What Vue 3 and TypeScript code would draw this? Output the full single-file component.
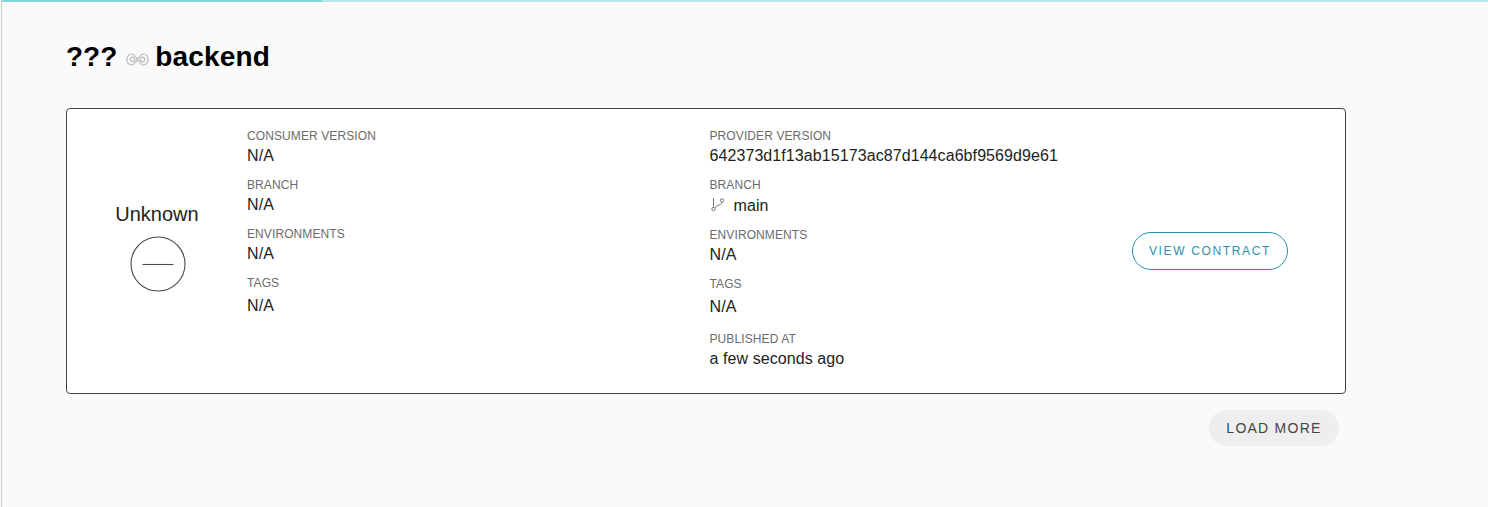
<script setup lang="ts">
interface Field { label: string; value: string; branch?: boolean; cls?: string }
const consumer: Field[] = [
  { label: 'CONSUMER VERSION', value: 'N/A' },
  { label: 'BRANCH', value: 'N/A' },
  { label: 'ENVIRONMENTS', value: 'N/A' },
  { label: 'TAGS', value: 'N/A', cls: 'tags' },
]
const provider: Field[] = [
  { label: 'PROVIDER VERSION', value: '642373d1f13ab15173ac87d144ca6bf9569d9e61' },
  { label: 'BRANCH', value: 'main', branch: true },
  { label: 'ENVIRONMENTS', value: 'N/A' },
  { label: 'TAGS', value: 'N/A', cls: 'tags' },
  { label: 'PUBLISHED AT', value: 'a few seconds ago', cls: 'published' },
]
</script>

<template>
  <div class="page">
    <div class="progress"><div class="progress-fill"></div></div>
    <main class="content">
      <h1 class="title">
        <span>???</span>
        <svg class="link-icon" width="23" height="13" viewBox="0 0 23 13" fill="none" stroke="#b8b8b8" stroke-width="1.2">
          <path d="M11.500 6.500C9.500 3 7.800 1 5.500 1 2.900 1 .8 3.400.8 6.500S2.900 12 5.500 12c2.300 0 4-2 6-5.500zM11.500 6.500C13.500 3 15.200 1 17.500 1c2.600 0 4.700 2.400 4.700 5.500S20.100 12 17.500 12c-2.300 0-4-2-6-5.500z" />
          <circle cx="6.500" cy="6.500" r="2.300" />
          <circle cx="16.500" cy="6.500" r="2.300" />
        </svg>
        <span class="provider-name">backend</span>
      </h1>
      <section class="card">
        <div class="status">
          <div class="status-text">Unknown</div>
          <svg class="status-icon" width="56" height="56" viewBox="0 0 56 56" fill="none" stroke="#4a4a4a" stroke-width="1.100">
            <circle cx="28" cy="28" r="27" />
            <path d="M12.500 28.500h31" />
          </svg>
        </div>
        <div class="col">
          <div v-for="f in consumer" :key="f.label" class="field" :class="f.cls">
            <div class="label">{{ f.label }}</div>
            <div class="value">{{ f.value }}</div>
          </div>
        </div>
        <div class="col provider">
          <div v-for="f in provider" :key="f.label" class="field" :class="f.cls">
            <div class="label">{{ f.label }}</div>
            <div class="value" :class="{ branch: f.branch }">
              <svg v-if="f.branch" class="branch-icon" width="14" height="15" viewBox="0 0 14 15" fill="none" stroke="#777" stroke-width="1">
                <circle cx="2.500" cy="12" r="1.700" />
                <circle cx="11" cy="3.500" r="1.700" />
                <path d="M2.500 10.300V1M11 5.200c0 3-5 2.500-7.300 5.800" />
              </svg>
              {{ f.value }}
            </div>
          </div>
        </div>
        <div class="actions">
          <button class="view-btn" type="button">VIEW CONTRACT</button>
        </div>
      </section>
      <div class="more">
        <button class="more-btn" type="button">LOAD MORE</button>
      </div>
    </main>
  </div>
</template>

<style>
html, body { margin: 0; background: #fafafa; }
</style>

<style scoped>
.page {
  position: relative;
  height: 507px;
  overflow: hidden;
  box-sizing: border-box;
  margin-left: 1px;
  border-left: 1px solid #cfcfcf;
  background: #fafafa;
  font-family: "Liberation Sans", Arial, sans-serif;
  color: #222;
}
.progress {
  position: absolute;
  top: 0;
  left: -2px;
  right: 0;
  height: 2px;
  background: #b9e8ec;
}
.progress-fill {
  width: 322px;
  height: 100%;
  background: #7fd6dc;
}
.content {
  width: 1280px;
  padding: 39px 0 0 64px;
}
.title {
  display: flex;
  align-items: center;
  gap: 7px;
  margin: 0 0 33px;
  height: 36px;
  font-size: 28px;
  line-height: 36px;
  font-weight: 700;
  color: #000;
}
.link-icon { margin: 4px 0 0 2px; }
.provider-name { margin-left: -1px; letter-spacing: 0.150px; }
.card {
  box-sizing: border-box;
  display: grid;
  grid-template-columns: 180px 462.500px 1fr 213px;
  height: 286px;
  padding: 19px 0 0;
  border: 1px solid #444;
  border-radius: 4px;
  background: #fff;
}
.status {
  display: flex;
  flex-direction: column;
  align-items: center;
  padding: 74px 0 0;
}
.status-text {
  font-size: 20px;
  line-height: 24px;
  color: #222;
  margin-bottom: 10px;
}
.status-icon { margin-left: 1px; }
.field { margin-bottom: 9px; }
.label {
  font-size: 12px;
  line-height: 16px;
  letter-spacing: 0.100px;
  color: #6b6b6b;
}
.value {
  font-size: 16px;
  line-height: 24px;
  letter-spacing: 0.080px;
  color: #222;
}
.branch { display: flex; align-items: center; gap: 9px; height: 25px; }
.branch-icon { margin: -3px 0 0 1px; }
.tags .value { padding-top: 3px; }
.provider .tags { margin-bottom: 13px; }
.published .label { line-height: 15px; }
.actions { padding: 104px 0 0 0; }
.view-btn {
  box-sizing: border-box;
  width: 156px;
  height: 38px;
  padding: 0;
  border: 1px solid #2892ad;
  border-radius: 19px;
  background: #fff;
  color: #2892ad;
  font: 12px "Liberation Sans", Arial, sans-serif;
  letter-spacing: 1.650px;
}
.more {
  display: flex;
  justify-content: flex-end;
  padding: 16px 7px 0 0;
}
.more-btn {
  box-sizing: border-box;
  width: 130px;
  height: 36px;
  padding: 0;
  border: 0;
  border-radius: 18px;
  background: #eee;
  color: #444;
  font: 14px "Liberation Sans", Arial, sans-serif;
  letter-spacing: 1.250px;
}
</style>
